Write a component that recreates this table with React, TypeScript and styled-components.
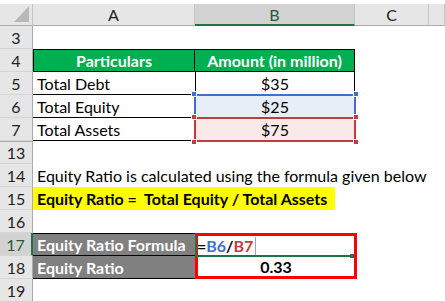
import React from 'react';
import styled, { createGlobalStyle } from 'styled-components';

const GlobalStyle = createGlobalStyle`
  html, body {
    margin: 0;
    padding: 0;
    background: #ffffff;
  }
  body {
    font-family: Lato, "Liberation Sans", sans-serif;
  }
`;

const Sheet = styled.div`
  display: grid;
  grid-template-columns: 33px 162px 160px 74px 1fr;
  grid-template-rows: 22px;
  grid-auto-rows: 23px;
  width: 445px;
  height: 301px;
  padding-top: 4px;
  box-sizing: border-box;
  overflow: hidden;
  background: #ffffff;
  font-size: 16px;
  color: #000;
`;

const Corner = styled.div`
  position: relative;
  background: #e6e6e6;
  border-right: 1px solid #c6c6c6;
  border-bottom: 1px solid #ababab;
  box-sizing: border-box;

  &::after {
    content: '';
    position: absolute;
    right: 3px;
    bottom: 3px;
    width: 15px;
    height: 16px;
    background: #b8b8b8;
    clip-path: polygon(100% 0, 100% 100%, 0 100%);
  }
`;

const ColHead = styled.div<{ $active?: boolean }>`
  display: flex;
  align-items: center;
  justify-content: center;
  background: ${p => (p.$active ? '#d2d2d2' : '#e6e6e6')};
  border-right: 1px solid #c6c6c6;
  border-bottom: ${p => (p.$active ? '2px solid #217346' : '1px solid #ababab')};
  box-sizing: border-box;
  color: ${p => (p.$active ? '#1f5c38' : '#222')};
  font-size: 16px;
`;

const RowHead = styled.div<{ $active?: boolean; $hiddenAbove?: boolean }>`
  display: flex;
  align-items: center;
  justify-content: center;
  background: ${p => (p.$active ? '#d2d2d2' : '#e6e6e6')};
  border-right: ${p => (p.$active ? '2px solid #217346' : '1px solid #ababab')};
  border-bottom: 1px solid #d4d4d4;
  border-top: ${p => (p.$hiddenAbove ? '1px solid #a8a8a8' : 'none')};
  box-sizing: border-box;
  color: ${p => (p.$active ? '#1f5c38' : '#222')};
  font-size: 16px;
`;

type CellProps = {
  $fill?: string;
  $bold?: boolean;
  $align?: 'left' | 'center';
  $color?: string;
  $top?: boolean;
  $right?: boolean;
  $bottom?: boolean;
  $left?: boolean;
};

const Cell = styled.div<CellProps>`
  position: relative;
  display: flex;
  align-items: center;
  justify-content: ${p => (p.$align === 'center' ? 'center' : 'flex-start')};
  padding: 0 4px;
  box-sizing: border-box;
  background: ${p => p.$fill || 'transparent'};
  color: ${p => p.$color || '#000'};
  font-weight: ${p => (p.$bold ? 700 : 400)};
  white-space: nowrap;
  border-top: ${p => (p.$top ? '1px solid #000' : 'none')};
  border-right: ${p => (p.$right ? '1px solid #000' : 'none')};
  border-bottom: ${p => (p.$bottom ? '1px solid #000' : 'none')};
  border-left: ${p => (p.$left ? '1px solid #000' : 'none')};
`;

const Wide = styled(Cell)<{ $span: number }>`
  grid-column: span ${p => p.$span};
  overflow: visible;
`;

const Highlight = styled.span`
  display: flex;
  align-items: center;
  height: 100%;
  margin-left: -4px;
  padding: 0 8px 0 4px;
  background: #ffff00;
  font-weight: 700;
`;

const RangeBox = styled.div<{ $color: string; $fill: string }>`
  position: absolute;
  left: -1px;
  right: -1px;
  top: -1px;
  bottom: -1px;
  border: 2px solid ${p => p.$color};
  background: ${p => p.$fill};
  z-index: 0;
`;

const Handle = styled.span<{ $color: string; $x: 'l' | 'r'; $y: 't' | 'b' }>`
  position: absolute;
  width: 6px;
  height: 6px;
  background: ${p => p.$color};
  border: 1px solid #fff;
  box-sizing: border-box;
  ${p => (p.$x === 'l' ? 'left: -4px;' : 'right: -4px;')}
  ${p => (p.$y === 't' ? 'top: -4px;' : 'bottom: -4px;')}
  z-index: 2;
`;

const CellText = styled.span`
  position: relative;
  z-index: 1;
`;

const FormulaBox = styled.div`
  grid-row: span 2;
  display: flex;
  flex-direction: column;
  margin-right: -2px;
  border: 3px solid #ff0000;
  box-sizing: border-box;
  font-weight: 700;
  z-index: 3;
`;

const FormulaCell = styled.div`
  position: relative;
  flex: 1;
  display: flex;
  align-items: center;
  border-left: 2px solid #217346;
  margin-left: -3px;
  border-bottom: 2px solid #217346;

  &::after {
    content: '';
    position: absolute;
    right: 0;
    bottom: -3px;
    width: 4px;
    height: 4px;
    background: #217346;
  }
`;

const FormulaText = styled.span`
  padding-right: 2px;
  border-right: 1px solid #a6a6a6;
  line-height: 18px;
`;

const Ref = styled.span<{ $color: string }>`
  color: ${p => p.$color};
`;

const ResultCell = styled.div`
  flex: 1;
  display: flex;
  align-items: center;
  justify-content: center;
`;

const App: React.FC = () => {
  const head = (n: number) => (
    <RowHead key={`h${n}`} $active={n === 17} $hiddenAbove={n === 13}>
      {n}
    </RowHead>
  );

  return (
    <>
      <GlobalStyle />
      <Sheet>
        <Corner />
        <ColHead>A</ColHead>
        <ColHead $active>B</ColHead>
        <ColHead>C</ColHead>
        <ColHead />

        {/* row 3 */}
        {head(3)}
        <Cell /><Cell /><Cell /><Cell />

        {/* row 4 */}
        {head(4)}
        <Cell $fill="#00b050" $color="#fff" $bold $align="center" $top $left $right $bottom>Particulars</Cell>
        <Cell $fill="#00b050" $color="#fff" $bold $align="center" $top $right $bottom>Amount (in million)</Cell>
        <Cell /><Cell />

        {/* row 5 */}
        {head(5)}
        <Cell $bottom>Total Debt</Cell>
        <Cell $align="center" $right $left>$35</Cell>
        <Cell /><Cell />

        {/* row 6 */}
        {head(6)}
        <Cell $bottom>Total Equity</Cell>
        <Cell $align="center">
          <RangeBox $color="#3f6fc6" $fill="#e8eef8" />
          <Handle $color="#3f6fc6" $x="l" $y="t" />
          <Handle $color="#3f6fc6" $x="r" $y="t" />
          <CellText>$25</CellText>
        </Cell>
        <Cell /><Cell />

        {/* row 7 */}
        {head(7)}
        <Cell $bottom>Total Assets</Cell>
        <Cell $align="center">
          <RangeBox $color="#c33a41" $fill="#f9e9e9" />
          <Handle $color="#c33a41" $x="l" $y="t" />
          <Handle $color="#c33a41" $x="r" $y="t" />
          <Handle $color="#c33a41" $x="l" $y="b" />
          <Handle $color="#c33a41" $x="r" $y="b" />
          <CellText>$75</CellText>
        </Cell>
        <Cell /><Cell />

        {/* row 13 */}
        {head(13)}
        <Cell /><Cell /><Cell /><Cell />

        {/* row 14 */}
        {head(14)}
        <Wide $span={4}>Equity Ratio is calculated using the formula given below</Wide>

        {/* row 15 */}
        {head(15)}
        <Wide $span={4}>
          <Highlight>Equity Ratio =&nbsp; Total Equity / Total Assets</Highlight>
        </Wide>

        {/* row 16 */}
        {head(16)}
        <Cell /><Cell /><Cell /><Cell />

        {/* row 17 */}
        {head(17)}
        <Cell $fill="#808080" $color="#fff" $bold $top $bottom>Equity Ratio Formula</Cell>
        <FormulaBox>
          <FormulaCell>
            <FormulaText>
              =<Ref $color="#3f6fc6">B6</Ref>/<Ref $color="#c33a41">B7</Ref>
            </FormulaText>
          </FormulaCell>
          <ResultCell>0.33</ResultCell>
        </FormulaBox>
        <Cell /><Cell />

        {/* row 18 */}
        {head(18)}
        <Cell $fill="#808080" $color="#fff" $bold $bottom>Equity Ratio</Cell>
        <Cell /><Cell />

        {/* row 19 */}
        {head(19)}
        <Cell /><Cell /><Cell /><Cell />
      </Sheet>
    </>
  );
};

export default App;
